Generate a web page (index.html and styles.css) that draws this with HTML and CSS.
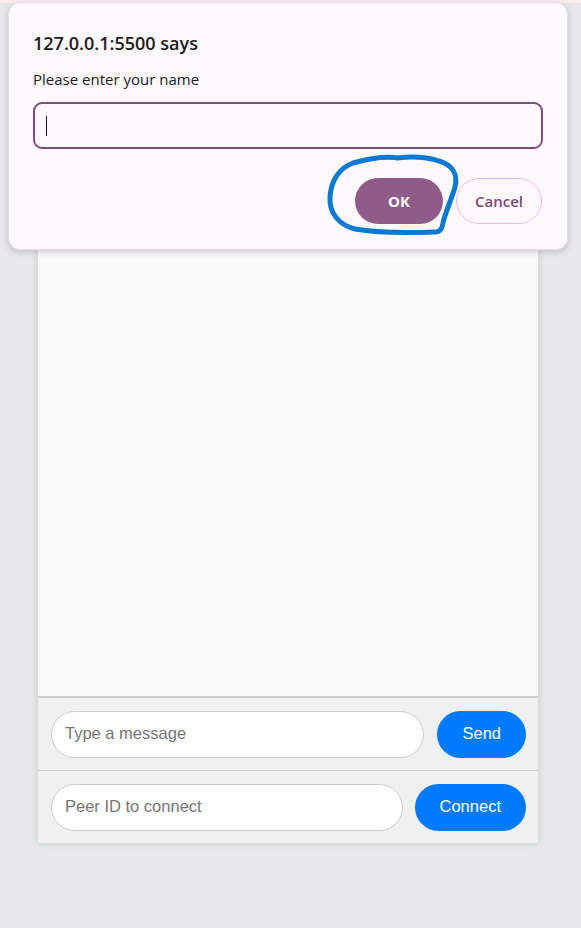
FILE: index.html
```html
<!DOCTYPE html>
<html lang="en">
<head>
<meta charset="utf-8">
<title>Chat</title>
<link rel="stylesheet" href="styles.css">
</head>
<body>
<div class="topstrip"></div>
<div class="chat">
  <div class="messages"></div>
  <div class="row row-send">
    <input class="field" type="text" placeholder="Type a message">
    <button class="btn">Send</button>
  </div>
  <div class="row row-connect">
    <input class="field" type="text" placeholder="Peer ID to connect">
    <button class="btn">Connect</button>
  </div>
</div>

<div class="dialog">
  <div class="dlg-title">127.0.0.1:5500 says</div>
  <div class="dlg-msg">Please enter your name</div>
  <div class="dlg-input"><span class="caret"></span></div>
  <div class="dlg-actions">
    <button class="dlg-ok">OK</button>
    <button class="dlg-cancel">Cancel</button>
  </div>
  <svg class="scribble" width="140" height="90" viewBox="0 0 140 90">
    <path d="M72 5 C58 3 40 6 26 10 C12 15 4 28 3 44 C2 60 12 72 28 76 C50 80 80 80 108 79 C114 79 115 75 116 70 C118 60 124 48 128 34 C131 22 126 12 112 8 C100 4 86 3 70 5" fill="none" stroke="#0a79d0" stroke-width="5" stroke-linecap="round" stroke-linejoin="round"/>
  </svg>
</div>
</body>
</html>
```

FILE: styles.css
```css
html, body {
  margin: 0;
  padding: 0;
}
body {
  width: 581px;
  height: 928px;
  background: #e6e9e9;
  font-family: "Liberation Sans", Arial, sans-serif;
  position: relative;
  overflow: hidden;
}
.topstrip {
  height: 3px;
  background: #fcedf1;
}
.chat {
  width: 500px;
  margin: 7px 0 0 38px;
  background: #f9f9f9;
  box-shadow: 0 0 8px rgba(0, 0, 0, 0.12);
  display: flex;
  flex-direction: column;
}
.messages {
  height: 686px;
  background: #f9f9f9;
  border-bottom: 2px solid #cccccc;
}
.row {
  display: flex;
  align-items: center;
  background: #f0f0f0;
  padding: 13px 12px 12px 13px;
}
.row-send {
  gap: 13px;
  border-bottom: 1px solid #cccccc;
}
.row-connect {
  gap: 12px;
}
.field {
  flex: 1;
  min-width: 0;
  height: 47px;
  box-sizing: border-box;
  border: 1px solid #cccccc;
  border-radius: 24px;
  background: #ffffff;
  padding: 0 12px 2px 13px;
  font-family: "Liberation Sans", Arial, sans-serif;
  font-size: 16.5px;
  color: #333;
  outline: none;
}
.field::placeholder {
  color: #757575;
}
.btn {
  height: 47px;
  border: none;
  border-radius: 24px;
  background: #007bff;
  color: #ffffff;
  font-family: "Liberation Sans", Arial, sans-serif;
  font-size: 16.5px;
  padding: 0 25px 2px 25px;
}

/* prompt dialog overlay */
.dialog {
  position: absolute;
  left: 8px;
  top: 2px;
  width: 560px;
  height: 248px;
  box-sizing: border-box;
  background: #fff8fd;
  border-radius: 12px;
  border: 1px solid #eadbe6;
  box-shadow: 0 2px 6px rgba(60, 40, 60, 0.22);
  padding: 0 24px 0 24px;
  font-family: "Open Sans", "Noto Sans", sans-serif;
  color: #1d1b1e;
}
.dlg-title {
  font-size: 18px;
  font-weight: 600;
  margin-top: 27px;
  line-height: 26px;
  letter-spacing: 0;
}
.dlg-msg {
  font-size: 15px;
  margin-top: 12px;
  line-height: 22px;
}
.dlg-input {
  margin-top: 12px;
  height: 47px;
  box-sizing: border-box;
  border: 2px solid #7d4d7b;
  border-radius: 9px;
  background: #fff8fd;
  display: flex;
  align-items: center;
  padding-left: 11px;
}
.caret {
  width: 1px;
  height: 20px;
  background: #1d1b1e;
}
.dlg-actions {
  display: flex;
  justify-content: flex-end;
  gap: 13px;
  margin-top: 29px;
  padding-right: 1px;
}
.dlg-ok {
  width: 88px;
  height: 46px;
  border: none;
  border-radius: 23px;
  background: #8f5c89;
  color: #ffffff;
  font-family: "Open Sans", "Noto Sans", sans-serif;
  font-weight: 700;
  font-size: 15px;
}
.dlg-cancel {
  width: 86px;
  height: 46px;
  border: 1px solid #f2b8e8;
  border-radius: 23px;
  background: #fff8fd;
  color: #7b4a77;
  font-family: "Open Sans", "Noto Sans", sans-serif;
  font-weight: 600;
  font-size: 15px;
}
.scribble {
  position: absolute;
  left: 318px;
  top: 150px;
  overflow: visible;
}
```
